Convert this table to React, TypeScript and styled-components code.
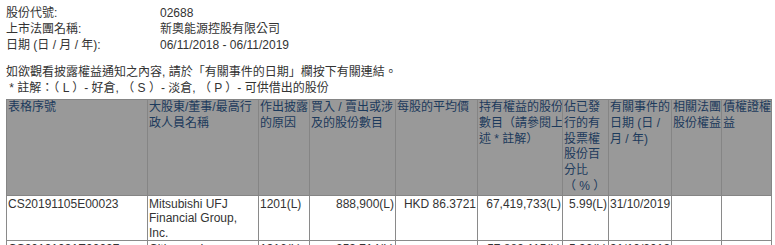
import React from 'react';
import styled, { createGlobalStyle } from 'styled-components';

const GlobalStyle = createGlobalStyle`
    html, body {
        margin: 0;
        padding: 0;
        background: #ffffff;
    }
    body {
        font-family: "Liberation Sans", "Noto Sans CJK TC", Arial, sans-serif;
        font-size: 12px;
        color: #333333;
    }
`;

const Page = styled.div`
    padding: 5px 0 0 6px;
    width: 769px;
    height: 240px;
    overflow: hidden;
`;

const InfoGrid = styled.div`
    display: grid;
    grid-template-columns: 154px 1fr;
    line-height: 16px;
`;

const Note = styled.div<{ $gap?: number }>`
    line-height: 16px;
    margin-top: ${(p) => p.$gap ?? 0}px;
    white-space: nowrap;
`;

const Table = styled.table`
    border-collapse: collapse;
    table-layout: fixed;
    width: 766px;
    margin-top: 3px;
`;

const HeadCell = styled.th`
    background: #999999;
    color: #1c3a5c;
    font-weight: normal;
    text-align: left;
    vertical-align: top;
    line-height: 15.8px;
    padding: 0 0 0 1px;
    border: 1px solid #858585;
    white-space: nowrap;
    overflow: hidden;
`;

const HeadLine = styled.span`
    display: block;
`;

const Cell = styled.td<{ $right?: boolean }>`
    background: #ffffff;
    color: #333333;
    text-align: ${(p) => (p.$right ? 'right' : 'left')};
    vertical-align: top;
    line-height: 14.5px;
    padding: 1px 1px 0 1px;
    border: 1px solid #8a8a8a;
    white-space: normal;
`;

const columns = [141, 111, 51, 86, 82, 85, 46, 63, 50, 50];

// header captions, one entry per rendered line
const headers: string[][] = [
    ['表格序號'],
    ['大股東/董事/最高行', '政人員名稱'],
    ['作出披露', '的原因'],
    ['買入 / 賣出或涉', '及的股份數目'],
    ['每股的平均價'],
    ['持有權益的股份', '數目（請參閱上', '述 * 註解）'],
    ['佔已發', '行的有', '投票權', '股份百', '分比', '（ % ）'],
    ['有關事件的', '日期 (日 /', '月 / 年)'],
    ['相關法團', '股份權益'],
    ['債權證權', '益']
];

interface Row {
    id: string;
    name: string;
    reason: string;
    shares: string;
    price: string;
    held: string;
    pct: string;
    date: string;
}

const rows: Row[] = [
    {
        id: 'CS20191105E00023',
        name: 'Mitsubishi UFJ Financial Group, Inc.',
        reason: '1201(L)',
        shares: '888,900(L)',
        price: 'HKD 86.3721',
        held: '67,419,733(L)',
        pct: '5.99(L)',
        date: '31/10/2019'
    },
    {
        id: 'CS20191031E00227',
        name: 'Citigroup Inc.',
        reason: '1316(L)',
        shares: '253,714(L)',
        price: '',
        held: '57,889,115(L)',
        pct: '5.96(L)',
        date: '31/10/2019'
    }
];

export default function App() {
    return (
        <>
            <GlobalStyle />
            <Page>
                <InfoGrid>
                    <div>股份代號:</div>
                    <div>02688</div>
                    <div>上市法團名稱:</div>
                    <div>新奧能源控股有限公司</div>
                    <div>日期 (日 / 月 / 年):</div>
                    <div>06/11/2018 - 06/11/2019</div>
                </InfoGrid>
                <Note $gap={11}>如欲觀看披露權益通知之內容, 請於「有關事件的日期」欄按下有關連結。</Note>
                <Note>&nbsp;* 註解：（ L ）- 好倉, （ S ）- 淡倉, （ P ）- 可供借出的股份</Note>
                <Table>
                    <colgroup>
                        {columns.map((w, i) => (
                            <col key={i} style={{ width: w }} />
                        ))}
                    </colgroup>
                    <thead>
                        <tr>
                            {headers.map((lines, i) => (
                                <HeadCell key={i}>
                                    {lines.map((l) => (
                                        <HeadLine key={l}>{l}</HeadLine>
                                    ))}
                                </HeadCell>
                            ))}
                        </tr>
                    </thead>
                    <tbody>
                        {rows.map((r) => (
                            <tr key={r.id}>
                                <Cell>{r.id}</Cell>
                                <Cell>{r.name}</Cell>
                                <Cell>{r.reason}</Cell>
                                <Cell $right>{r.shares}</Cell>
                                <Cell $right>{r.price}</Cell>
                                <Cell $right>{r.held}</Cell>
                                <Cell $right>{r.pct}</Cell>
                                <Cell>{r.date}</Cell>
                                <Cell />
                                <Cell />
                            </tr>
                        ))}
                    </tbody>
                </Table>
            </Page>
        </>
    );
}
